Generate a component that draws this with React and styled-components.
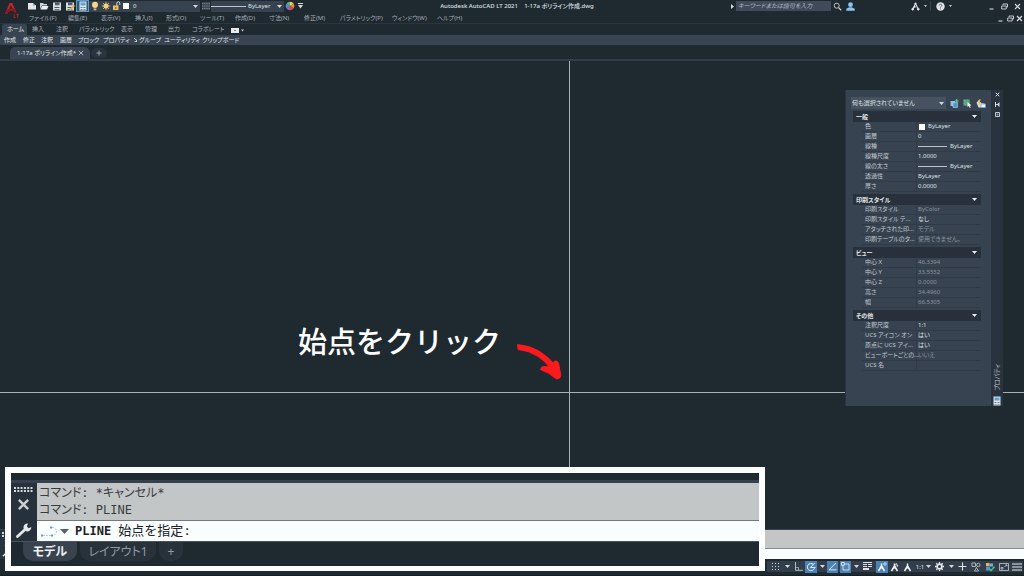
import React from 'react';
import styled, { createGlobalStyle, css } from 'styled-components';

const GlobalStyle = createGlobalStyle`
  * { box-sizing: border-box; }
  body {
    margin: 0;
    background: #1f2930;
    color: #c6ccd2;
    font-family: "Noto Sans", "Noto Sans CJK JP", sans-serif;
    font-size: 6px;
    line-height: 10px;
    overflow: hidden;
  }
  button, input, select {
    font: inherit;
    font-feature-settings: inherit;
    color: inherit;
    border: 0;
    padding: 0;
    margin: 0;
    background: none;
  }
  a { color: inherit; text-decoration: none; }
  svg { display: block; flex: none; }
`;

const Page = styled.div`
  display: flex;
  flex-direction: column;
  height: 100vh;
  white-space: nowrap;
  font-feature-settings: "palt";
`;

/* ---------- header ---------- */

const Header = styled.header`
  display: flex;
  height: 24px;
  border-bottom: 1px solid #2a3540;
`;

const LogoButton = styled.button`
  width: 26px;
  flex: none;
`;

const HeaderRows = styled.div`
  flex: 1;
`;

const TitleRow = styled.div`
  display: grid;
  grid-template-columns: 1fr auto 1fr;
  align-items: center;
  height: 12px;
`;

const Tools = styled.div`
  display: flex;
  align-items: center;
  height: 12px;
`;

const IconButton = styled.button`
  display: flex;
  align-items: center;
  justify-content: center;
  flex: none;
  width: ${({ $w }) => $w || 13}px;
  height: 12px;
  ${({ $on }) => $on && css`
    background: #35566f;
    box-shadow: inset 0 0 0 1px #5b9bd0;
  `}
`;

const LayerBox = styled.div`
  display: flex;
  align-items: center;
  width: 111px;
  height: 11px;
  background: #36424f;
`;

const SelectWrap = styled.label`
  position: relative;
  display: flex;
  align-items: center;
  flex: 1;
  height: 100%;
  select {
    flex: 1;
    appearance: none;
    line-height: 10px;
    padding-left: ${({ $pad }) => $pad || 0}px;
    color: #dfe3e6;
  }
  svg {
    position: absolute;
    right: 2px;
    pointer-events: none;
  }
`;

const LineBox = styled.div`
  display: flex;
  align-items: center;
  width: 73px;
  height: 11px;
  background: #36424f;
`;

const Stroke = styled.span`
  flex: none;
  width: ${({ $w }) => $w}px;
  height: 1px;
  background: #bcc3c9;
`;

const Title = styled.h1`
  margin: 0 16px 0 0;
  font-size: 6px;
  font-weight: 500;
  color: #dde1e4;
  white-space: pre;
`;

const RightTools = styled(Tools)`
  justify-content: flex-end;
`;

const Search = styled.input`
  width: 95px;
  height: 10px;
  padding-left: 2px;
  background: #3f4a5b;
  font-style: italic;
  &::placeholder { color: #b3bac3; opacity: 1; }
`;

const Divider = styled.span`
  width: 1px;
  height: 10px;
  background: #36424f;
`;

const Spacer = styled.span`
  width: ${({ $w }) => $w}px;
`;

const MenuRow = styled.nav`
  display: flex;
  align-items: center;
  height: 12px;
  padding-left: 3px;
`;

const MenuItem = styled.button`
  min-width: ${({ $w }) => $w}px;
  text-align: left;
  line-height: 12px;
  color: #a4adb4;
`;

const MdiTools = styled(Tools)`
  margin-left: auto;
`;

/* ---------- ribbon ---------- */

const RibbonTabs = styled.nav`
  display: flex;
  height: 11px;
  padding-left: 2px;
`;

const RibbonTab = styled.button`
  min-width: ${({ $w }) => $w}px;
  padding: 0 1px 0 5px;
  line-height: 11px;
  text-align: left;
  border-radius: 2px 2px 0 0;
  color: ${({ $on }) => ($on ? '#e4e8ea' : '#a9b1b8')};
  background: ${({ $on }) => ($on ? '#384451' : 'none')};
`;

const RibbonPanels = styled.div`
  display: flex;
  height: 10px;
  padding-left: 2px;
  background: #384451;
`;

const PanelButton = styled.button`
  display: flex;
  align-items: center;
  gap: 4px;
  min-width: ${({ $w }) => $w}px;
  padding-left: 2px;
  color: #e0e4e7;
`;

const FileTabs = styled.div`
  display: flex;
  align-items: flex-end;
  height: 16px;
  padding-left: 10px;
  border-bottom: 2px solid #323d4a;
`;

const FileTab = styled.div`
  display: flex;
  align-items: center;
  width: 80px;
  height: 12px;
  padding-left: 7px;
  gap: 2px;
  background: #384451;
  border-radius: 5px 6px 0 0;
  color: #e0e4e7;
`;

const NewTab = styled.button`
  display: flex;
  align-items: center;
  justify-content: center;
  width: 16px;
  height: 10px;
  margin: 0 0 1px 1px;
  border-radius: 5px;
  background: #2a343f;
`;

/* ---------- drawing area ---------- */

const Canvas = styled.main`
  position: relative;
  flex: 1;
  min-height: 0;
`;

const CrossV = styled.i`
  position: absolute;
  left: 569px;
  top: 0;
  bottom: 0;
  width: 1px;
  background: #a9b0b4;
`;

const CrossH = styled.i`
  position: absolute;
  top: 331px;
  left: 0;
  right: 0;
  height: 1px;
  background: #a9b0b4;
`;

const Note = styled.p`
  position: absolute;
  left: 298px;
  top: 259px;
  margin: 0;
  font-family: "Noto Sans CJK JP", sans-serif;
  font-size: 29px;
  font-weight: 500;
  line-height: 40px;
  font-feature-settings: normal;
  color: #fff;
`;

const Arrow = styled.svg`
  position: absolute;
  left: 516px;
  top: 280px;
`;

/* ---------- properties palette ---------- */

const Palette = styled.aside`
  position: absolute;
  top: 29px;
  right: 21px;
  display: flex;
  width: 158px;
  height: 316px;
  background: #374350;
  border-left: 1px solid #2b3541;
`;

const PaletteBody = styled.div`
  flex: 1;
  min-width: 0;
  padding: 7px 4px 0 5px;
`;

const PaletteBar = styled.div`
  display: flex;
  flex-direction: column;
  align-items: center;
  gap: 5px;
  width: 12px;
  padding: 2px 0 0;
  background: #29333f;
`;

const BarButton = styled.button`
  display: flex;
  height: 5px;
`;

const BarTitle = styled.span`
  margin-top: auto;
  writing-mode: vertical-rl;
  text-orientation: sideways;
  transform: rotate(180deg);
  color: #c0c7cd;
`;

const PickRow = styled.div`
  display: flex;
  align-items: center;
  height: 12px;
  margin-bottom: 2px;
`;

const Pick = styled(SelectWrap)`
  flex: none;
  width: 95px;
  margin-right: 2px;
  background: #465260;
`;

const Section = styled.section`
  padding: 0 6px 2px 2px;
`;

const SectionHead = styled.button`
  display: flex;
  align-items: center;
  justify-content: space-between;
  width: 100%;
  height: 11px;
  padding: 0 4px 0 3px;
  background: #27303b;
  color: #e6e9ec;
  font-weight: 600;
`;

const PropTable = styled.table`
  width: 119px;
  margin-left: 9px;
  border-collapse: separate;
  border-spacing: 0;
  table-layout: fixed;
  th, td {
    height: 10px;
    padding: 0 0 0 4px;
    line-height: 9px;
    border-bottom: 1px solid #303b47;
    text-align: left;
    font-weight: 400;
  }
  th {
    width: 54px;
    padding-left: 3px;
    color: #c3cad0;
  }
  td {
    padding-left: 1px;
    border-left: 1px solid #303b47;
  }
`;

const Value = styled.span`
  display: flex;
  align-items: center;
  gap: 3px;
  height: 9px;
  color: ${({ $dim }) => ($dim ? '#89939d' : '#dde1e5')};
`;

const Swatch = styled.i`
  width: 6px;
  height: 6px;
  margin-left: ${({ $m }) => $m || 0}px;
  background: #fff;
`;

/* ---------- bottom bars ---------- */

const CommandDock = styled.div`
  display: flex;
  height: 30px;
  border-top: 1px solid #38434f;
`;

const DockSide = styled.div`
  display: flex;
  flex-direction: column;
  align-items: center;
  justify-content: space-between;
  width: 13px;
  padding: 2px 0;
  background: #29333f;
`;

const DockLines = styled.div`
  flex: 1;
  background: linear-gradient(#c3c6c5 18px, #85898b 18px, #85898b 19px, #fafdfd 19px);
`;

const StatusBar = styled.footer`
  display: flex;
  justify-content: flex-end;
  height: 17px;
  padding: 2px 1px 3px 0;
  border-bottom: 1px solid #171e24;
`;

const StatusGroup = styled.div`
  display: flex;
  align-items: center;
  padding-left: 2px;
  background: #323e4b;
`;

const StatusButton = styled.button`
  display: flex;
  align-items: center;
  justify-content: center;
  flex: none;
  gap: 2px;
  width: ${({ $w }) => $w || 13}px;
  height: 12px;
  color: #e2e6e9;
  background: ${({ $on }) => ($on ? '#4d82b4' : 'none')};
`;

/* ---------- enlarged command window ---------- */

const Inset = styled.section`
  position: absolute;
  z-index: 2;
  left: 5px;
  right: 259px;
  bottom: 5px;
  padding-top: 7px;
  border: 6px solid #fdfefe;
  border-width: 6px 6px 5px;
  background: #1f2930;
`;

const InsetMain = styled.div`
  display: grid;
  grid-template-columns: 26px 1fr;
  border-top: 3px solid #36404f;
`;

const InsetSide = styled.div`
  display: flex;
  flex-direction: column;
  align-items: center;
  padding: 4px 2px 0 0;
  background: #27313c;
`;

const InsetIcon = styled.button`
  display: flex;
  margin-top: ${({ $mt }) => $mt}px;
`;

const History = styled.div`
  height: 38px;
  padding: 2px 2px 0;
  border-bottom: 1px solid #74787b;
  background: #c3c6c6;
  color: #393c3f;
  font: 12px/17px "DejaVu Sans Mono", "Noto Sans CJK JP", monospace;
  font-feature-settings: "palt";
  white-space: pre;
`;

const Line = styled.div``;

const Prompt = styled.label`
  display: flex;
  align-items: center;
  height: 20px;
  padding-left: 3px;
  background: #fafdfd;
  color: #202326;
  font: 12px/20px "DejaVu Sans Mono", "Noto Sans CJK JP", monospace;
  font-feature-settings: normal;
  b { margin: 0 7px 0 6px; }
  span { font-size: 13px; }
  input { flex: 1; min-width: 0; height: 18px; }
`;

const LayoutTabs = styled.nav`
  display: flex;
  align-items: flex-start;
  height: 25px;
  padding-left: 12px;
  border-top: 1px solid #4a525a;
`;

const LayoutTab = styled.button`
  width: ${({ $w }) => $w}px;
  height: 19px;
  margin-right: 3px;
  border-radius: 0 0 10px 10px;
  font-size: 12px;
  line-height: 19px;
  font-weight: ${({ $on }) => ($on ? 600 : 400)};
  color: ${({ $on }) => ($on ? '#edf0f2' : '#929ba3')};
  background: ${({ $on }) => ($on ? '#38434f' : '#27323b')};
`;

/* ---------- icons ---------- */

const Caret = ({ c = '#d5dade' }) => (
  <svg width="5" height="3" viewBox="0 0 5 3"><path d="M0 0h5L2.500 3z" fill={c} /></svg>
);

const Logo = () => (
  <svg width="26" height="23" viewBox="0 0 26 23">
    <path d="M5 14L9.600 3h2.600l4.200 9.500-2.600-.6-.7-1.700-4.700 1.300L7.400 14z" fill="#c9242b" />
    <path d="M9.100 9.200l1.800-4.300 1.500 3.500z" fill="#1f2930" />
    <path d="M5 14l2-4.500 6.500-1.400 2.900 4.400-2.600-.6-1-1.500-4.300 1.200L7.400 14z" fill="#8f161c" />
    <text x="13" y="18" fontSize="5" fontWeight="700" fill="#b5232a">LT</text>
  </svg>
);

const NewIcon = () => (
  <svg width="10" height="8" viewBox="0 0 10 8"><path d="M1 1h5l1 2h2v4.500H1z" fill="#e3e6e8" /><path d="M6 1l3 2.500H6z" fill="#9aa3aa" /></svg>
);

const OpenIcon = () => (
  <svg width="10" height="8" viewBox="0 0 10 8"><path d="M1 7V1h3l1 1h3v1.500H3z" fill="#cfd4d8" /><path d="M3 4h6.500L8 7.500H1.500z" fill="#f0f2f3" /></svg>
);

const SaveIcon = ({ pen }) => (
  <svg width="10" height="9" viewBox="0 0 10 9">
    <path d="M1 .5h8v8H1z" fill="#d9dde0" />
    <path d="M3 .5h4.500v2.700H3zM2.500 5h5v1h-5zM2.500 7h5v.7h-5z" fill="#4d5964" />
    {pen && <path d="M4.500 8.500l.5-2L9 2.700l1 1.200-4 4z" fill="#e6a94c" />}
  </svg>
);

const PlotIcon = () => (
  <svg width="8" height="10" viewBox="0 0 8 10">
    <rect x=".5" y=".5" width="7" height="9" fill="#dfe5ea" />
    <rect x="1.500" y="1.500" width="5" height="3" fill="#5aa4dc" />
    <path d="M1.500 6h2v1h-2zM4.500 6h2v1h-2zM1.500 8h2v.8h-2zM4.500 8h2v.8h-2z" fill="#6d7882" />
  </svg>
);

const BulbIcon = () => (
  <svg width="8" height="10" viewBox="0 0 8 10"><circle cx="4" cy="3.800" r="3" fill="#f8d684" /><path d="M2.600 6h2.800v1.500H2.600z" fill="#f0c66a" /><path d="M2.700 8h2.600v1.300H2.700z" fill="#b4bbc1" /></svg>
);

const SunIcon = () => (
  <svg width="10" height="10" viewBox="0 0 10 10">
    <path d="M5 .8v8.400M.8 5h8.400M2 2l6 6M8 2L2 8" stroke="#eebb58" strokeWidth=".9" />
    <circle cx="5" cy="5" r="2.500" fill="#f8d27a" />
  </svg>
);

const LockIcon = () => (
  <svg width="9" height="10" viewBox="0 0 9 10"><path d="M4.800 5V2.300a1.500 1.500 0 013 0V4" fill="none" stroke="#d8dde0" strokeWidth="1" /><path d="M1 4.500h5.500v4.500H1z" fill="#f0c15f" /><path d="M3.300 6h1v2h-1z" fill="#6a5423" /></svg>
);

const HatchIcon = () => (
  <svg width="8" height="8" viewBox="0 0 8 8"><rect width="8" height="8" fill="#3c4854" /><path d="M0 1.500h8M0 4h8M0 6.500h8" stroke="#7d8891" strokeWidth="1" strokeDasharray="1.200 1" /></svg>
);

const WheelIcon = () => (
  <svg width="10" height="10" viewBox="0 0 10 10">
    <path d="M5 5V.7a4.300 4.300 0 013.700 2.100z" fill="#f4cf55" />
    <path d="M5 5l3.700-2.200a4.300 4.300 0 010 4.400z" fill="#ee8a3f" />
    <path d="M5 5l3.700 2.200A4.300 4.300 0 015 9.300z" fill="#d9483f" />
    <path d="M5 5v4.300a4.300 4.300 0 01-3.700-2.100z" fill="#9a62b8" />
    <path d="M5 5L1.300 7.200a4.300 4.300 0 010-4.400z" fill="#4a96dc" />
    <path d="M5 5L1.300 2.800A4.300 4.300 0 015 .7z" fill="#5fb673" />
  </svg>
);

const MoreIcon = () => (
  <svg width="5" height="6" viewBox="0 0 5 6"><path d="M0 .5h5" stroke="#d5dade" /><path d="M0 2h5L2.500 5.500z" fill="#d5dade" /></svg>
);

const SearchIcon = () => (
  <svg width="9" height="9" viewBox="0 0 9 9" fill="none" stroke="#cdd2d6"><circle cx="3.700" cy="3.700" r="2.500" strokeWidth=".9" /><path d="M5.600 5.600l2.600 2.600" strokeWidth="1.300" /></svg>
);

const UserIcon = () => (
  <svg width="9" height="9" viewBox="0 0 9 9" fill="#8cc4ec"><circle cx="4.500" cy="2.700" r="2.400" /><path d="M.3 8.700V6.800l3-1.600h2.400l3 1.600v1.900z" /></svg>
);

const StoreIcon = () => (
  <svg width="9" height="9" viewBox="0 0 9 9" fill="none" stroke="#e1e5e8"><path d="M4.500 1.500L1.600 7.500M4.500 1.500l2.900 6M2.500 5.500L5 4.800" strokeWidth="1.100" /><circle cx="1.700" cy="7.200" r=".9" fill="#e1e5e8" /><circle cx="7.300" cy="7.200" r=".9" fill="#e1e5e8" /><circle cx="4.500" cy="1.500" r=".6" fill="#e1e5e8" /></svg>
);

const HelpIcon = () => (
  <svg width="9" height="9" viewBox="0 0 9 9"><circle cx="4.500" cy="4.500" r="4.200" fill="#dfe3e6" /><path d="M3.200 3.500a1.300 1.300 0 112 1.100q-.7.400-.7 1M4.500 6.500v.8" fill="none" stroke="#46515b" strokeWidth=".9" /></svg>
);

const MinIcon = () => (
  <svg width="7" height="7" viewBox="0 0 7 7"><path d="M1.500 6h4" stroke="#d5dade" strokeWidth="1.100" /></svg>
);

const RestoreIcon = () => (
  <svg width="7" height="7" viewBox="0 0 7 7" fill="none" stroke="#d5dade" strokeWidth=".9"><path d="M2 2V1h4.500v3H5.300" /><path d="M.7 3h4.500v3H.7z" /></svg>
);

const CloseIcon = ({ s = 7, c = '#dfe3e6', w = 1.1 }) => (
  <svg width={s} height={s} viewBox="0 0 7 7"><path d="M1 1l5 5M6 1L1 6" stroke={c} strokeWidth={w} /></svg>
);

const PlusIcon = ({ s = 6, w = 1, c = '#b7bec4' }) => (
  <svg width={s} height={s} viewBox="0 0 8 8"><path d="M4 .5v7M.5 4h7" stroke={c} strokeWidth={w} /></svg>
);

const AutoHideIcon = () => (
  <svg width="5" height="5" viewBox="0 0 5 5" fill="#d5dade"><path d="M0 0h1v5H0zM1 2h1.500v1H1zM4.500 0v5L2 2.500z" /></svg>
);

const GearSquareIcon = () => (
  <svg width="5" height="5" viewBox="0 0 5 5" fill="none" stroke="#c3cad0"><path d="M.5.5h4v4h-4z" /><path d="M2 2h1v1H2z" strokeWidth=".6" /></svg>
);

const PickAddIcon = () => (
  <svg width="9" height="9" viewBox="0 0 9 9"><path d="M.5 2h4.500v5H.5z" fill="#8cc0e8" /><path d="M3 3.500h4.500v5H3z" fill="#4f97d0" stroke="#c4e0f4" strokeWidth=".5" /><path d="M6.700 0v4M4.700 2h4" stroke="#5fd08c" strokeWidth="1.200" /></svg>
);

const SelectObjIcon = () => (
  <svg width="9" height="9" viewBox="0 0 9 9"><path d="M.8.8h5.500v5.500H.8z" fill="#49ad78" stroke="#9fb3ad" strokeWidth=".7" strokeDasharray="1 .6" /><path d="M4.500 3l4 3.500-1.700.2.9 1.800-.9.400-.9-1.800-1.400 1z" fill="#f0f2f4" /></svg>
);

const QuickSelIcon = () => (
  <svg width="10" height="9" viewBox="0 0 10 9"><path d="M.5 3.500l3-3 1 3.500 4 .5v4h-6z" fill="#d9dee2" /><path d="M3 .5l2 0-1.500 2.500h2L2.500 6.500l.8-2.500H2z" fill="#f0b54a" /><path d="M5 5h4.500v3.500H5z" fill="#f3f5f6" stroke="#5b9fd6" strokeWidth=".7" /></svg>
);

const DotsIcon = () => (
  <svg width="8" height="8" viewBox="0 0 8 8"><path d="M0 .5h8M0 3.500h8M0 6.500h8" stroke="#cfd5da" strokeDasharray="1 2" strokeWidth="1" /></svg>
);

const OrthoIcon = () => (
  <svg width="9" height="9" viewBox="0 0 9 9" fill="none" stroke="#bfc6cc"><path d="M1.500 0v8.300H9" strokeWidth=".9" /><path d="M1.500 5.500h3v3" strokeWidth=".7" /></svg>
);

const PolarIcon = () => (
  <svg width="10" height="10" viewBox="0 0 10 10" fill="none" stroke="#e8eff5"><path d="M7.300 2.300A3.600 3.600 0 108.400 6.200" strokeWidth="1" /><path d="M4.500 5.500h5M4.500 5.500L8.700 1" strokeWidth=".9" /></svg>
);

const AngleIcon = () => (
  <svg width="9" height="9" viewBox="0 0 9 9" fill="none" stroke="#e8eff5"><path d="M8 1L1 7.800h7.500" strokeWidth=".9" /></svg>
);

const SnapIcon = () => (
  <svg width="9" height="9" viewBox="0 0 9 9" fill="none" stroke="#e8eff5"><path d="M2 2h6v6H2z" strokeWidth=".8" /><path d="M.5.5h2.800v2.800H.5z" strokeWidth=".9" fill="#4d82b4" /></svg>
);

const WeightIcon = () => (
  <svg width="9" height="9" viewBox="0 0 9 9" stroke="#dde2e6"><path d="M0 .5h9M0 2.500h4M5 2.500h4M0 4.500h4M5 4.500h4" strokeWidth="1" /><path d="M0 7h6" strokeWidth="2" /></svg>
);

const ScaleIcon = ({ mark }) => (
  <svg width="10" height="10" viewBox="0 0 10 10" stroke="#f0f3f5">
    <path d="M4.500 1.500v3M4.500 4L1.500 9M4.500 4l3 5" fill="none" strokeWidth="1.500" />
    <path d="M4.500 4L6 6.500 4.500 6 3 6.500z" fill="#f0f3f5" />
    {mark === 1 && <circle cx="8" cy="2" r="1.200" fill="none" strokeWidth=".8" />}
    {mark === 2 && <path d="M6.500 1l-.8 2h2.200L7 5" fill="none" strokeWidth=".8" />}
  </svg>
);

const GearIcon = () => (
  <svg width="9" height="9" viewBox="0 0 9 9" fill="none" stroke="#e8ebee"><circle cx="4.500" cy="4.500" r="2.400" strokeWidth="1.700" /><path d="M4.500 0v9M0 4.500h9M1.300 1.300l6.400 6.400M7.700 1.300L1.300 7.700" strokeWidth="1.300" strokeDasharray="1.500 20" /><path d="M4.500 9V7.500M9 4.500H7.500M7.700 7.700L6.700 6.700M1.300 7.700l1-1" strokeWidth="1.300" /></svg>
);

const IsolateIcon = () => (
  <svg width="10" height="10" viewBox="0 0 10 10" fill="none" stroke="#c6cdd2" strokeWidth=".8"><path d="M1 1h3.500v3.500H1z" /><circle cx="7.300" cy="3" r="1.700" /><path d="M3.500 9l2-3.500L7.500 9z" /></svg>
);

const GraphicsIcon = () => (
  <svg width="10" height="10" viewBox="0 0 10 10"><path d="M1 1h3.500v3H1z" fill="#e9b555" /><path d="M4.500 1.500H8v3H4.500z" fill="#6eb0e4" /><path d="M1 4.500h4v4H1z" fill="#4f93d2" /><path d="M4 6.500l2 2L9.500 4.500" fill="none" stroke="#4fb67c" strokeWidth="1.600" /></svg>
);

const CleanIcon = () => (
  <svg width="10" height="8" viewBox="0 0 10 8" fill="none" stroke="#c6cdd2" strokeWidth=".8"><path d="M.5.500h9v7h-9z" /><path d="M5.500 3.500L8 2M6.500 2H8v1.300M2 4.500h2V6H2z" /></svg>
);

const BurgerIcon = () => (
  <svg width="10" height="8" viewBox="0 0 10 8"><path d="M0 1h10M0 4h10M0 7h10" stroke="#e2e6e9" strokeWidth="1.200" /></svg>
);

const GripIcon = ({ w = 19 }) => (
  <svg width={w} height="6" viewBox={`0 0 ${w} 6`}><path d={`M0 1h${w}M0 4h${w}`} stroke="#d3d8dc" strokeWidth="2" strokeDasharray="2 1.300" /></svg>
);

const WrenchIcon = ({ s = 17 }) => (
  <svg width={s} height={s} viewBox="0 0 17 17"><path d="M2.500 14.500l7-6.500" stroke="#e4e8ea" strokeWidth="2.800" strokeLinecap="round" /><path d="M13 1.500a4.200 4.200 0 00-4.500 5l2.600 2.800A4.200 4.200 0 0016.300 5l-2.600 1.200-1.800-1.800z" fill="#e4e8ea" /></svg>
);

const PolylineIcon = () => (
  <svg width="20" height="13" viewBox="0 0 20 13" fill="none"><path d="M3 10.500h10M12 2.500a4 4 0 011 8" stroke="#bcc9d2" strokeDasharray="2 1" /><path d="M1 9.500h2v2H1zM11 9.500h2v2h-2zM10 1.500h2v2h-2z" fill="#5f9fd8" /></svg>
);

/* ---------- data ---------- */

const menus = [
  ['ファイル(F)', 39], ['編集(E)', 33], ['表示(V)', 34], ['挿入(I)', 31], ['形式(O)', 34],
  ['ツール(T)', 35], ['作成(D)', 34], ['寸法(N)', 35], ['修正(M)', 36], ['パラメトリック(P)', 52],
  ['ウィンドウ(W)', 45], ['ヘルプ(H)', 34],
];

const tabs = [
  ['ホーム', 25], ['挿入', 24], ['注釈', 23], ['パラメトリック', 42], ['表示', 24],
  ['管理', 23], ['出力', 24], ['コラボレート', 40],
];

const panels = [
  ['作成', 19], ['修正', 18], ['注釈', 19], ['画層', 18], ['ブロック', 25],
  ['プロパティ', 36, true], ['グループ', 25], ['ユーティリティ', 37], ['クリップボード', 36],
];

const sections = [
  ['一般', [
    ['色', 'ByLayer', 'swatch'],
    ['画層', '0'],
    ['線種', 'ByLayer', 'line'],
    ['線種尺度', '1.0000'],
    ['線の太さ', 'ByLayer', 'line'],
    ['透過性', 'ByLayer'],
    ['厚さ', '0.0000'],
  ]],
  ['印刷スタイル', [
    ['印刷スタイル', 'ByColor', 'dim'],
    ['印刷スタイル テ...', 'なし'],
    ['アタッチされた印...', 'モデル', 'dim'],
    ['印刷テーブルのタ...', '使用できません。', 'dim'],
  ]],
  ['ビュー', [
    ['中心 X', '46.3394', 'dim'],
    ['中心 Y', '33.5552', 'dim'],
    ['中心 Z', '0.0000', 'dim'],
    ['高さ', '34.4960', 'dim'],
    ['幅', '66.5305', 'dim'],
  ]],
  ['その他', [
    ['注釈尺度', '1:1'],
    ['UCS アイコン オン', 'はい'],
    ['原点に UCS アイ...', 'はい'],
    ['ビューポートごとの...', 'いいえ', 'dim'],
    ['UCS 名', ''],
  ]],
];

const AppHeader = () => (
  <Header>
    <LogoButton aria-label="AutoCAD LT"><Logo /></LogoButton>
    <HeaderRows>
      <TitleRow>
        <Tools>
          <IconButton $w={11}><NewIcon /></IconButton>
          <IconButton><OpenIcon /></IconButton>
          <IconButton><SaveIcon /></IconButton>
          <IconButton><SaveIcon pen /></IconButton>
          <IconButton $on><PlotIcon /></IconButton>
          <LayerBox>
            <IconButton $w={12}><BulbIcon /></IconButton>
            <IconButton $w={10}><SunIcon /></IconButton>
            <IconButton $w={11}><LockIcon /></IconButton>
            <Swatch $m={1} />
            <SelectWrap $pad={4}>
              <select aria-label="画層"><option>0</option></select>
              <Caret />
            </SelectWrap>
          </LayerBox>
          <IconButton $w={11}><HatchIcon /></IconButton>
          <LineBox>
            <Stroke $w={35} />
            <SelectWrap $pad={2}>
              <select aria-label="線種"><option>ByLayer</option></select>
              <Caret />
            </SelectWrap>
          </LineBox>
          <IconButton $w={12}><WheelIcon /></IconButton>
          <IconButton $w={9}><MoreIcon /></IconButton>
        </Tools>
        <Title>{'Autodesk AutoCAD LT 2021    1-17a ポリライン作成.dwg'}</Title>
        <RightTools>
          <IconButton $w={8}><svg width="3" height="5" viewBox="0 0 3 5"><path d="M0 0v5l3-2.500z" fill="#d5dade" /></svg></IconButton>
          <Search aria-label="検索" placeholder="キーワードまたは語句を入力" />
          <IconButton><SearchIcon /></IconButton>
          <IconButton><UserIcon /></IconButton>
          <Spacer $w={53} />
          <IconButton $w={11}><StoreIcon /></IconButton>
          <IconButton $w={9}><svg width="3" height="2" viewBox="0 0 3 2"><path d="M0 0h3L1.500 2z" fill="#c6ccd2" /></svg></IconButton>
          <Divider />
          <Spacer $w={4} />
          <IconButton $w={11}><HelpIcon /></IconButton>
          <IconButton $w={8}><svg width="3" height="2" viewBox="0 0 3 2"><path d="M0 0h3L1.500 2z" fill="#c6ccd2" /></svg></IconButton>
          <Spacer $w={31} />
          <IconButton><MinIcon /></IconButton>
          <IconButton><RestoreIcon /></IconButton>
          <IconButton><CloseIcon /></IconButton>
        </RightTools>
      </TitleRow>
      <MenuRow>
        {menus.map(([name, w]) => <MenuItem key={name} $w={w}>{name}</MenuItem>)}
        <MdiTools>
          <IconButton $w={10}><MinIcon /></IconButton>
          <IconButton $w={10}><RestoreIcon /></IconButton>
          <IconButton $w={9}><CloseIcon /></IconButton>
        </MdiTools>
      </MenuRow>
    </HeaderRows>
  </Header>
);

const Properties = () => (
  <Palette>
    <PaletteBody>
      <PickRow>
        <Pick $pad={1}>
          <select aria-label="選択"><option>何も選択されていません</option></select>
          <Caret />
        </Pick>
        <IconButton><PickAddIcon /></IconButton>
        <IconButton><SelectObjIcon /></IconButton>
        <IconButton><QuickSelIcon /></IconButton>
      </PickRow>
      {sections.map(([head, rows]) => (
        <Section key={head}>
          <SectionHead>{head}<Caret c="#eef0f2" /></SectionHead>
          <PropTable>
            <tbody>
              {rows.map(([label, value, kind]) => (
                <tr key={label}>
                  <th scope="row">{label}</th>
                  <td>
                    <Value $dim={kind === 'dim'}>
                      {kind === 'swatch' && <Swatch $m={1} />}
                      {kind === 'line' && <Stroke $w={29} />}
                      {value}
                    </Value>
                  </td>
                </tr>
              ))}
            </tbody>
          </PropTable>
        </Section>
      ))}
    </PaletteBody>
    <PaletteBar>
      <BarButton aria-label="閉じる"><CloseIcon s={5} w={1.4} /></BarButton>
      <BarButton><AutoHideIcon /></BarButton>
      <BarButton><GearSquareIcon /></BarButton>
      <BarTitle>プロパティ</BarTitle>
      <PlotIcon />
    </PaletteBar>
  </Palette>
);

const Status = () => (
  <StatusBar>
    <StatusGroup>
      <StatusButton><DotsIcon /></StatusButton>
      <StatusButton $w={10}><Caret /></StatusButton>
      <StatusButton><OrthoIcon /></StatusButton>
      <StatusButton $w={12} $on><PolarIcon /></StatusButton>
      <StatusButton $w={10}><Caret /></StatusButton>
      <StatusButton $w={11} $on><AngleIcon /></StatusButton>
      <StatusButton $w={2} />
      <StatusButton $w={11} $on><SnapIcon /></StatusButton>
      <StatusButton $w={10}><Caret /></StatusButton>
      <StatusButton><WeightIcon /></StatusButton>
      <StatusButton $w={2} />
      <StatusButton $w={12} $on><ScaleIcon mark={1} /></StatusButton>
      <StatusButton><ScaleIcon mark={2} /></StatusButton>
      <StatusButton><ScaleIcon /></StatusButton>
      <StatusButton $w={19}>1:1<Caret /></StatusButton>
      <StatusButton><GearIcon /></StatusButton>
      <StatusButton $w={10}><Caret /></StatusButton>
      <StatusButton><PlusIcon s={9} c="#e2e6e9" /></StatusButton>
      <StatusButton $w={14}><IsolateIcon /></StatusButton>
      <StatusButton $w={14}><GraphicsIcon /></StatusButton>
      <StatusButton><CleanIcon /></StatusButton>
      <StatusButton><BurgerIcon /></StatusButton>
    </StatusGroup>
  </StatusBar>
);

const CommandInset = () => (
  <Inset>
    <InsetMain>
      <InsetSide>
        <GripIcon />
        <InsetIcon $mt={5} aria-label="閉じる"><CloseIcon s={13} w={1.3} c="#c9ced2" /></InsetIcon>
        <InsetIcon $mt={11} aria-label="カスタマイズ"><WrenchIcon /></InsetIcon>
      </InsetSide>
      <div>
        <History>
          <Line>コマンド: *キャンセル*</Line>
          <Line>コマンド: PLINE</Line>
        </History>
        <Prompt>
          <PolylineIcon />
          <svg width="9" height="5" viewBox="0 0 9 5"><path d="M0 0h9L4.500 5z" fill="#5c6064" /></svg>
          <b>PLINE</b>
          <span>始点を指定:</span>
          <input type="text" />
        </Prompt>
      </div>
    </InsetMain>
    <LayoutTabs>
      <LayoutTab $w={54} $on>モデル</LayoutTab>
      <LayoutTab $w={76}>レイアウト1</LayoutTab>
      <LayoutTab $w={24}>+</LayoutTab>
    </LayoutTabs>
  </Inset>
);

const App = () => (
  <Page>
    <GlobalStyle />
    <AppHeader />
    <RibbonTabs>
      {tabs.map(([name, w], i) => <RibbonTab key={name} $w={w} $on={i === 0}>{name}</RibbonTab>)}
      <IconButton $w={20}>
        <svg width="13" height="5" viewBox="0 0 13 5"><path d="M0 0h8v5H0z" fill="#e8ebed" /><path d="M3 3h2L4 1.500z" fill="#4d5862" /><path d="M10 1.500h3L11.500 3.500z" fill="#c6ccd2" /></svg>
      </IconButton>
    </RibbonTabs>
    <RibbonPanels>
      {panels.map(([name, w, more]) => (
        <PanelButton key={name} $w={w}>
          {name}
          {more && <svg width="3" height="4" viewBox="0 0 3 4" fill="none" stroke="#e0e4e7" strokeWidth=".8"><path d="M0 0l3 3M3 1v2.500H.5" /></svg>}
        </PanelButton>
      ))}
    </RibbonPanels>
    <FileTabs>
      <FileTab>1-17a ポリライン作成*<CloseIcon s={6} c="#b7bec4" /></FileTab>
      <NewTab aria-label="新しいタブ"><PlusIcon /></NewTab>
    </FileTabs>
    <Canvas>
      <CrossV />
      <CrossH />
      <Note>始点をクリック</Note>
      <Arrow width="50" height="42" viewBox="0 0 50 42">
        <path d="M1.500 3.500Q25 5 41.500 27L36 30Q24 11 2 8.500z" fill="#fb1a1e" stroke="#fb1a1e" strokeWidth=".8" strokeLinejoin="round" />
        <path d="M24.500 28.500Q25 25 29 25.500L36.500 26.500 38 20.500Q41 18.500 42.500 22L44.800 34.500Q44.500 38 40.500 38Q33 31.500 24.500 28.500z" fill="#fb1a1e" stroke="#fb1a1e" strokeWidth="1" strokeLinejoin="round" />
      </Arrow>
      <Properties />
    </Canvas>
    <CommandDock>
      <DockSide>
        <GripIcon w={9} />
        <CloseIcon s={6} />
        <WrenchIcon s={9} />
      </DockSide>
      <DockLines />
    </CommandDock>
    <Status />
    <CommandInset />
  </Page>
);

export default App;
